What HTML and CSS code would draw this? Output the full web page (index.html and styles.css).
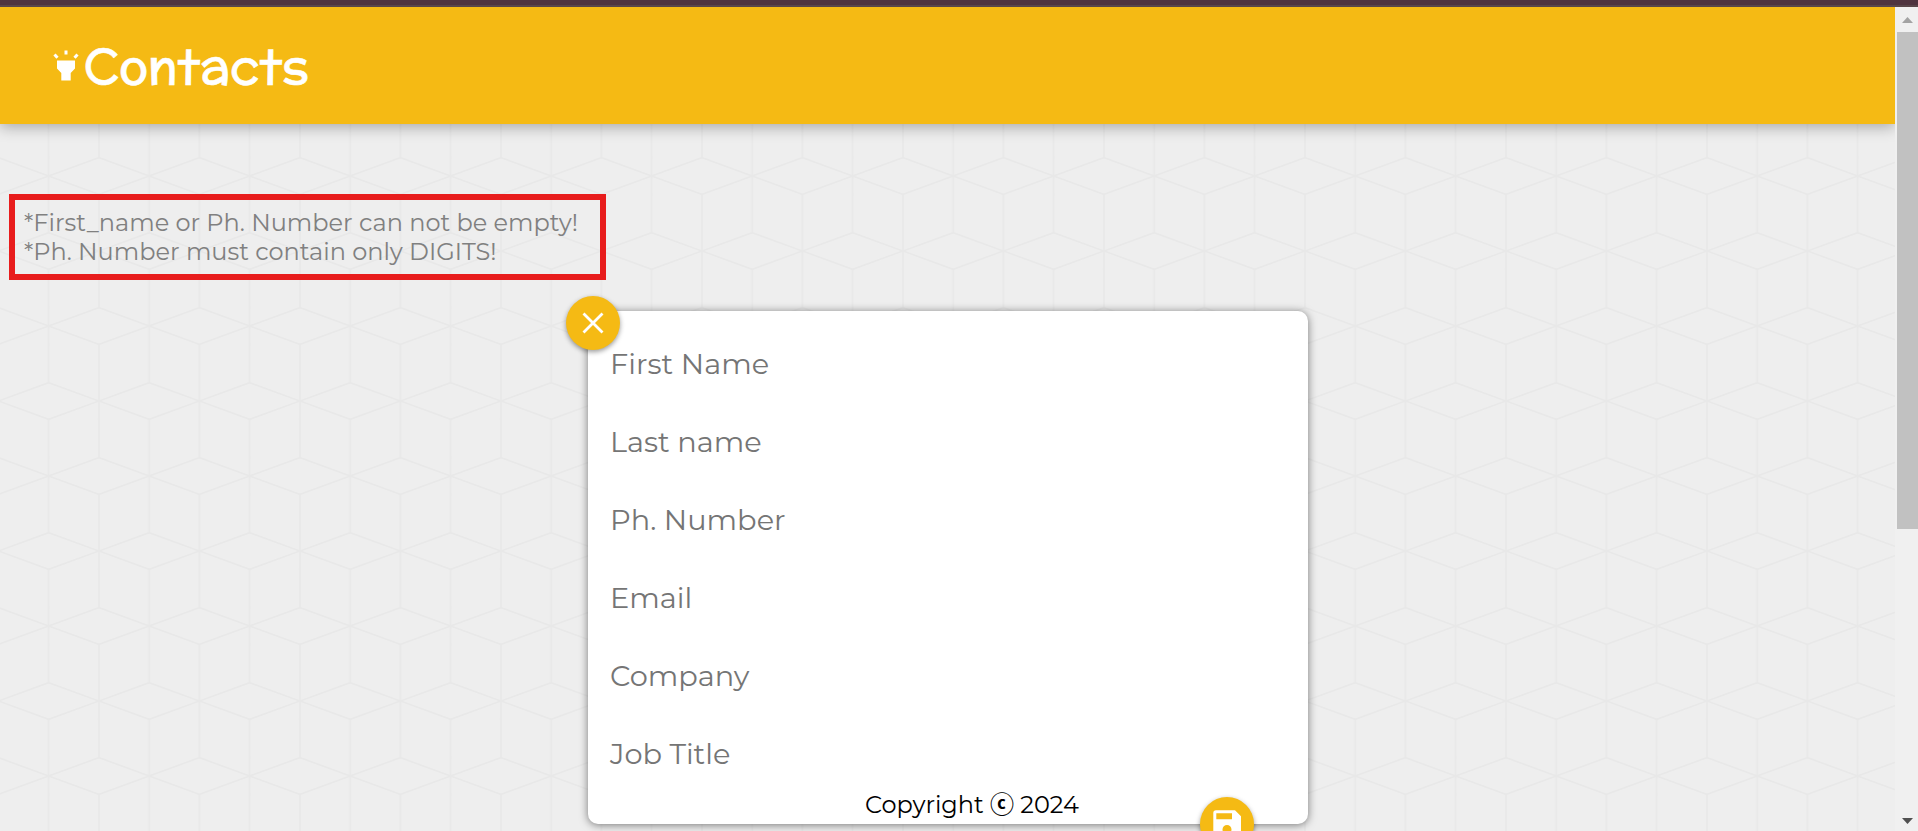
FILE: index.html
```html
<!DOCTYPE html>
<html lang="en">
<head>
<meta charset="utf-8">
<title>Contacts</title>
<link rel="stylesheet" href="styles.css">
</head>
<body>
<div class="top-strip"></div>
<div class="viewport">
  <div class="page">
    <svg class="pattern" width="1895" height="824">
      <defs>
        <pattern id="cubes" width="100.5" height="150" patternUnits="userSpaceOnUse" patternTransform="translate(-1.6 94)">
          <path d="M0 0L50.25-18.3L100.5 0L50.25 18.3ZM0 150L50.25 131.7L100.5 150L50.25 168.3ZM-50.25 75L0 56.7L50.25 75L0 93.3ZM50.25 75L100.5 56.7L150.75 75L100.5 93.3ZM50.25 18.3V131.7M0 0V56.7M0 93.3V150M100.5 0V56.7M100.5 93.3V150" fill="none" stroke="#e8e8e8" stroke-width="1.6"/>
        </pattern>
      </defs>
      <rect width="1895" height="824" fill="url(#cubes)"/>
    </svg>
    <header class="header">
      <svg class="torch" width="26" height="31" viewBox="0 0 26 31" fill="#fff">
        <path d="M4 10.5H22V18.5L17.7 23V30.5H8.3V23L4 18.5Z"/>
        <path d="M13 .5V4.5M1.5 4.5L4.5 7.8M24.5 4.5L21.5 7.8" fill="none" stroke="#fff" stroke-width="3"/>
      </svg>
      <h1 class="title">Contacts</h1>
    </header>
    <div class="errors">
      <p class="error">*First_name or Ph. Number can not be empty!</p>
      <p class="error">*Ph. Number must contain only DIGITS!</p>
    </div>
    <main class="card">
      <button class="round close" aria-label="Close">
        <svg width="54" height="54" viewBox="0 0 54 54"><path d="M17.5 17.5L36.5 36.5M36.5 17.5L17.5 36.5" stroke="#fff" stroke-width="2.8"/></svg>
      </button>
      <div class="field">First Name</div>
      <div class="field">Last name</div>
      <div class="field">Ph. Number</div>
      <div class="field">Email</div>
      <div class="field">Company</div>
      <div class="field">Job Title</div>
      <button class="round save" aria-label="Save">
        <svg width="54" height="54" viewBox="0 0 54 54"><path fill="#fff" fill-rule="evenodd" d="M16 13.3H35L41 19.3V38Q41 40.7 38.3 40.7H16Q13.3 40.7 13.3 38V16Q13.3 13.3 16 13.3ZM16.3 16.3V22.3H32V16.3ZM27 28A4.5 4.5 0 1 0 27 37A4.5 4.5 0 1 0 27 28Z"/></svg>
      </button>
      <footer class="copyright">Copyright <span class="mark">ⓒ</span> 2024</footer>
    </main>
  </div>
  <div class="scrollbar">
    <svg width="11" height="6" viewBox="0 0 11 6"><path d="M0 6L5.5 0L11 6Z" fill="#a3a3a3"/></svg>
    <div class="thumb"></div>
    <svg class="down" width="11" height="6" viewBox="0 0 11 6"><path d="M0 0H11L5.5 6Z" fill="#505050"/></svg>
  </div>
</div>
</body>
</html>
```
FILE: styles.css
```css
* { box-sizing: border-box; margin: 0; padding: 0; }
body { height: 831px; overflow: hidden; font-family: Montserrat, Inter, sans-serif; font-weight: 400; background: #eee; }
.top-strip { height: 7px; background: #4f343f; border-bottom: 2px solid #59464a; }
.viewport { display: flex; height: 824px; overflow: hidden; }
.page { position: relative; width: 1895px; height: 824px; overflow: hidden; }
.pattern { position: absolute; inset: 0; z-index: -1; }
.header { display: flex; height: 117px; padding: 31px 0 0 53px; background: #f5ba14; box-shadow: 0 3px 14px rgba(0, 0, 0, .3); }
.torch { margin-top: 12px; }
.title { margin-left: 5px; color: #fff; font-family: McLaren, "Comic Neue", Montserrat, sans-serif; font-size: 48px; line-height: 56px; font-weight: 400; white-space: nowrap; -webkit-text-stroke: .6px #fff; }
.errors { width: 597px; height: 86px; margin: 70px 0 0 9px; padding: 8px 0 0 9px; border: 6px solid #e81c1c; }
.error { font-size: 24px; line-height: 29px; color: #808080; white-space: nowrap; }
.card { position: relative; width: 720px; height: 513px; margin: 31px 0 0 588px; padding: 14px 0 0 22px; border-radius: 10px; background: #fff; box-shadow: 0 1px 8px rgba(0, 0, 0, .5); }
.field { height: 78px; line-height: 78px; font-size: 28.8px; color: #757575; white-space: nowrap; }
.round { position: absolute; width: 54px; height: 54px; border: 0; border-radius: 50%; background: #f5ba14; box-shadow: 0 2px 5px rgba(0, 0, 0, .4); }
.round svg { display: block; }
.close { left: -22px; top: -15px; }
.save { left: 612px; top: 486px; }
.copyright { position: absolute; left: 277px; top: 480px; font-size: 24px; line-height: 28px; color: #000; white-space: nowrap; }
.mark { font-family: "Noto Sans CJK KR", sans-serif; font-weight: 700; line-height: 1; }
.scrollbar { display: flex; flex-direction: column; align-items: flex-end; width: 23px; padding: 10px 0 7px; background: #f0f0f0; }
.scrollbar svg { flex: none; margin-right: 5px; }
.thumb { width: 21px; height: 497px; margin-top: 9px; background: #c1c1c1; }
.scrollbar .down { margin-top: auto; }
```
